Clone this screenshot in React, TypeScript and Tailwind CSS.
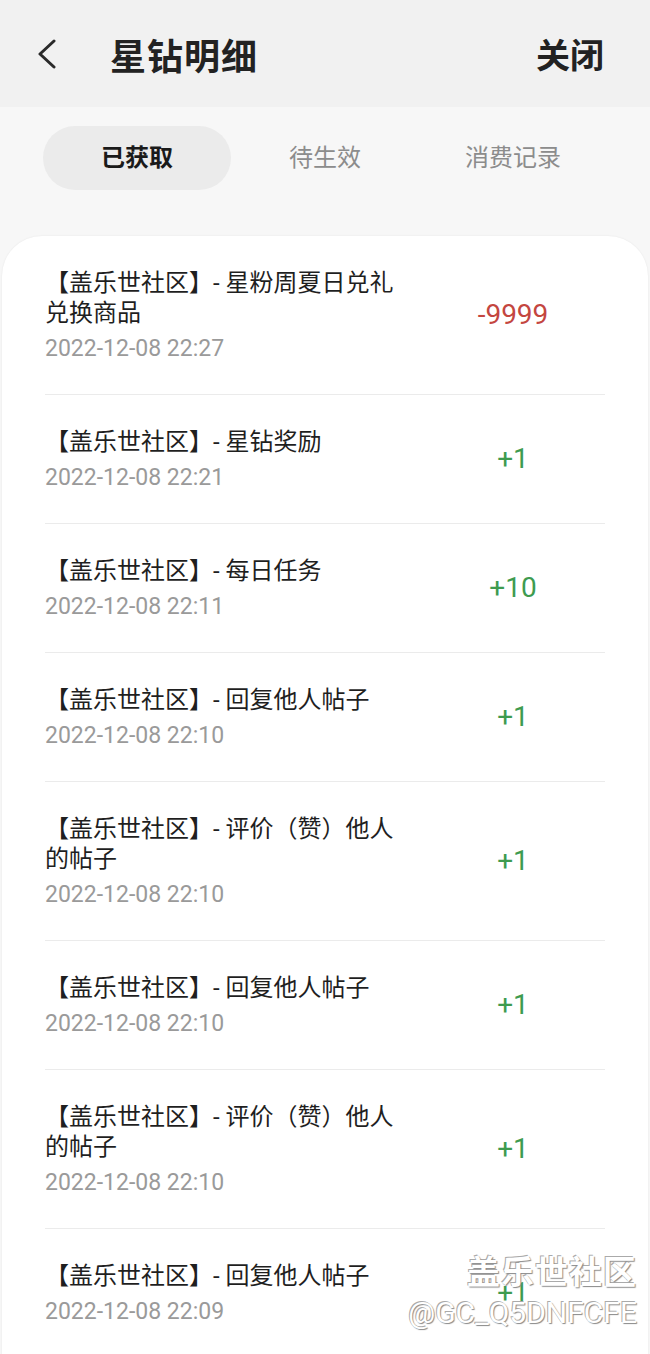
type Item = {
  title: string;
  time: string;
  value: string;
};

const items: Item[] = [
  { title: "【盖乐世社区】- 星粉周夏日兑礼兑换商品", time: "2022-12-08 22:27", value: "-9999" },
  { title: "【盖乐世社区】- 星钻奖励", time: "2022-12-08 22:21", value: "+1" },
  { title: "【盖乐世社区】- 每日任务", time: "2022-12-08 22:11", value: "+10" },
  { title: "【盖乐世社区】- 回复他人帖子", time: "2022-12-08 22:10", value: "+1" },
  { title: "【盖乐世社区】- 评价（赞）他人的帖子", time: "2022-12-08 22:10", value: "+1" },
  { title: "【盖乐世社区】- 回复他人帖子", time: "2022-12-08 22:10", value: "+1" },
  { title: "【盖乐世社区】- 评价（赞）他人的帖子", time: "2022-12-08 22:10", value: "+1" },
  { title: "【盖乐世社区】- 回复他人帖子", time: "2022-12-08 22:09", value: "+1" },
];

const tabs = ["已获取", "待生效", "消费记录"];

function BackIcon() {
  return (
    <svg width="22" height="30" viewBox="0 0 22 30" fill="none">
      <path
        d="M18 2 L4 15 L18 28"
        stroke="currentColor"
        strokeWidth="3"
        strokeLinecap="round"
        strokeLinejoin="round"
      />
    </svg>
  );
}

export default function App() {
  return (
    <div className="relative w-[650px] h-[1354px] overflow-hidden bg-[#f7f7f7] font-['Roboto','Noto_Sans_CJK_SC',sans-serif]">
      {/* Header */}
      <header className="flex h-[107px] items-center bg-[#f1f1f1] pl-[36px] pr-[46px]">
        <span className="text-[#2a2a2a]">
          <BackIcon />
        </span>
        <h1 className="ml-[52px] font-['Noto_Sans_CJK_SC',sans-serif] text-[36px] font-bold tracking-[1px] text-[#222]">
          星钻明细
        </h1>
        <button
          type="button"
          className="ml-auto font-['Noto_Sans_CJK_SC',sans-serif] text-[34px] font-bold text-[#222]"
        >
          关闭
        </button>
      </header>

      {/* Tabs */}
      <nav className="flex px-[43px] pt-[19px]">
        {tabs.map((t, i) => (
          <div
            key={t}
            className={
              i === 0
                ? "flex h-[64px] w-[188px] items-center justify-center rounded-full bg-[#ebebeb] text-[24px] font-bold text-[#1a1a1a]"
                : "flex h-[64px] w-[188px] items-center justify-center text-[24px] text-[#8c8c8c]"
            }
          >
            {t}
          </div>
        ))}
      </nav>

      {/* List card */}
      <section className="mx-[2px] mt-[46px] rounded-t-[40px] bg-white px-[43px] shadow-[0_0_2px_rgba(0,0,0,0.08)]">
        {items.map((it, i) => (
          <div key={i} className="flex items-center border-b border-[#ebebeb] pt-[32px] pb-[32px]">
            <div className="w-[372px]">
              <p className="text-[24px] leading-[30px] text-[#1f1f1f]">{it.title}</p>
              <p className="mt-[8px] text-[23px] leading-[26px] text-[#9a9a9a]">{it.time}</p>
            </div>
            <div
              className={
                it.value.startsWith("-")
                  ? "flex-1 pl-[4px] text-center text-[28px] text-[#c4463f]"
                  : "flex-1 pl-[4px] text-center text-[28px] text-[#3e9b4f]"
              }
            >
              {it.value}
            </div>
          </div>
        ))}
      </section>

      {/* Watermark */}
      <div className="pointer-events-none absolute right-[13px] top-[1252px] flex flex-col items-end text-white [text-shadow:1px_1px_1px_#888,-1px_-1px_0_#aaa]">
        <span className="text-[33px] font-bold leading-[42px] tracking-[1px]">盖乐世社区</span>
        <span className="text-[30px] leading-[38px]">@GC_Q5DNFCFE</span>
      </div>
    </div>
  );
}
